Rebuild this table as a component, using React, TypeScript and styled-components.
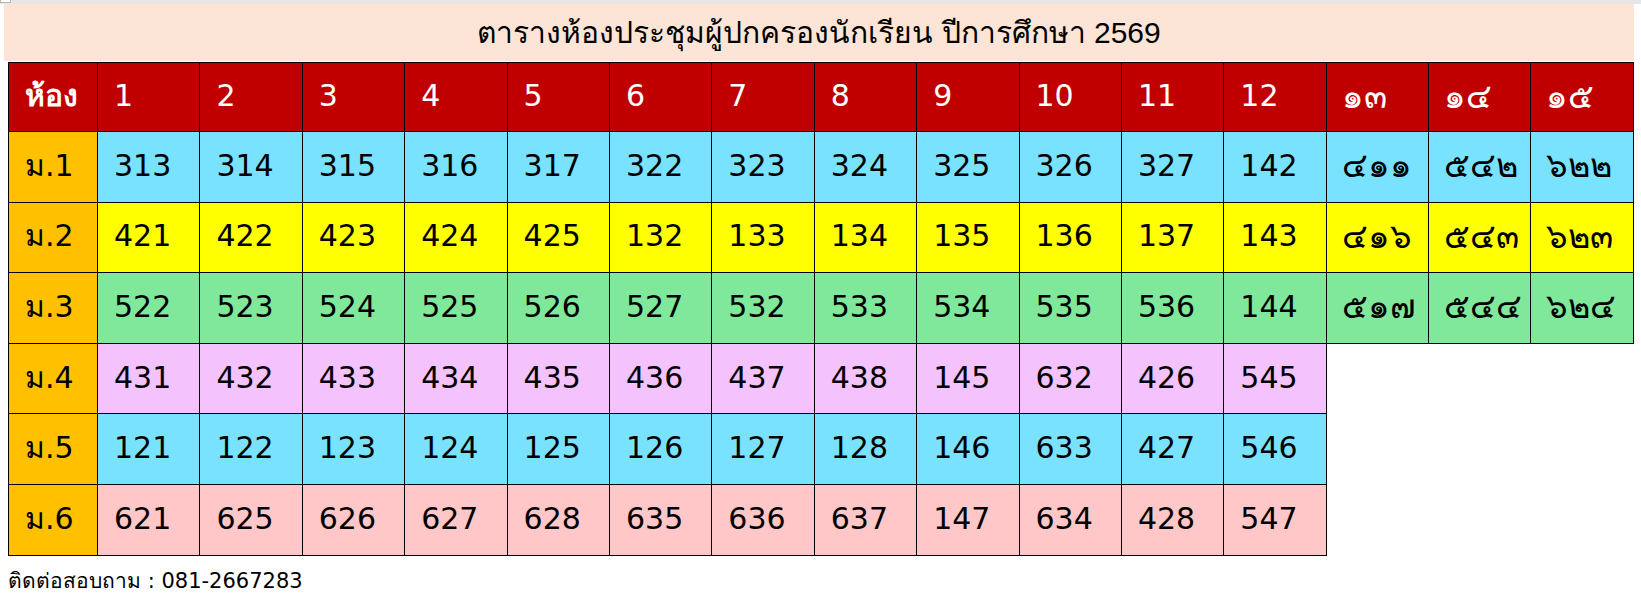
import React from "react";
import styled, { createGlobalStyle } from "styled-components";

const Global = createGlobalStyle`
  html, body { margin: 0; padding: 0; background: #ffffff; }
  body { font-family: "DejaVu Sans", "Noto Sans", sans-serif; color: #000; }
`;

const Page = styled.div`
  width: 1641px;
  display: flex;
  flex-direction: column;
`;

const TopStrip = styled.div`
  height: 4px;
  background: #e6e6e6;
  display: flex;
`;

const Corner = styled.div`
  width: 11px;
  height: 3px;
  background: #ffffff;
  border: 1px solid #b5b5b5;
  border-top: none;
  box-sizing: border-box;
`;

const TitleBand = styled.div`
  margin-left: 4px;
  width: 1630px;
  height: 57px;
  background: #fce4d6;
  display: flex;
  align-items: center;
  justify-content: center;
  font-family: "Liberation Sans", "Noto Sans", "DejaVu Sans", sans-serif;
  font-size: 30px;
  color: #000;
`;

const Table = styled.div`
  margin-left: 8px;
  margin-top: 1px;
  display: flex;
  flex-direction: column;
`;

const Row = styled.div<{ $h: number }>`
  display: grid;
  grid-template-columns: 90px repeat(15, 102.4px);
  height: ${(p) => p.$h}px;
`;

const Cell = styled.div<{ $bg: string; $fg?: string; $top?: boolean; $left?: boolean; $thai?: boolean; $bold?: boolean }>`
  box-sizing: border-box;
  background: ${(p) => p.$bg};
  color: ${(p) => p.$fg || "#000"};
  border-right: 1px solid #000;
  border-bottom: 1px solid #000;
  ${(p) => (p.$top ? "border-top: 1px solid #000;" : "")}
  ${(p) => (p.$left ? "border-left: 1px solid #000;" : "")}
  display: flex;
  align-items: center;
  padding-left: ${(p) => (p.$thai ? 15 : 16)}px;
  padding-bottom: 3px;
  font-size: ${(p) => (p.$thai ? 34 : 30)}px;
  font-weight: ${(p) => (p.$bold ? 700 : 400)};
  white-space: nowrap;
  overflow: hidden;
`;

const Footer = styled.div`
  margin-left: 8px;
  margin-top: 8px;
  font-size: 21px;
  font-family: "DejaVu Sans", "Noto Sans", sans-serif;
`;

const RED = "#c00000";
const ORANGE = "#ffc000";

const header = ["1", "2", "3", "4", "5", "6", "7", "8", "9", "10", "11", "12", "๑๓", "๑๔", "๑๕"];

const rows: { label: string; bg: string; cells: string[] }[] = [
  { label: "ม.1", bg: "#79e3ff", cells: ["313", "314", "315", "316", "317", "322", "323", "324", "325", "326", "327", "142", "๔๑๑", "๕๔๒", "๖๒๒"] },
  { label: "ม.2", bg: "#ffff00", cells: ["421", "422", "423", "424", "425", "132", "133", "134", "135", "136", "137", "143", "๔๑๖", "๕๔๓", "๖๒๓"] },
  { label: "ม.3", bg: "#7fe89b", cells: ["522", "523", "524", "525", "526", "527", "532", "533", "534", "535", "536", "144", "๕๑๗", "๕๔๔", "๖๒๔"] },
  { label: "ม.4", bg: "#f4c3fd", cells: ["431", "432", "433", "434", "435", "436", "437", "438", "145", "632", "426", "545"] },
  { label: "ม.5", bg: "#79e3ff", cells: ["121", "122", "123", "124", "125", "126", "127", "128", "146", "633", "427", "546"] },
  { label: "ม.6", bg: "#ffc7c7", cells: ["621", "625", "626", "627", "628", "635", "636", "637", "147", "634", "428", "547"] },
];

const isThaiDigit = (s: string) => /[\u0E50-\u0E59]/.test(s);

export default function App() {
  return (
    <>
      <Global />
      <Page>
        <TopStrip>
          <Corner />
        </TopStrip>
        <TitleBand>ตารางห้องประชุมผู้ปกครองนักเรียน ปีการศึกษา 2569</TitleBand>
        <Table>
          <Row $h={70}>
            <Cell $bg={RED} $fg="#fff" $top $left $bold>
              ห้อง
            </Cell>
            {header.map((h) => (
              <Cell key={h} $bg={RED} $fg="#fff" $top $thai={isThaiDigit(h)}>
                {h}
              </Cell>
            ))}
          </Row>
          {rows.map((r) => (
            <Row key={r.label} $h={70.6}>
              <Cell $bg={ORANGE} $left>
                {r.label}
              </Cell>
              {r.cells.map((c, i) => (
                <Cell key={i} $bg={r.bg} $thai={isThaiDigit(c)}>
                  {c}
                </Cell>
              ))}
            </Row>
          ))}
        </Table>
        <Footer>ติดต่อสอบถาม : 081-2667283</Footer>
      </Page>
    </>
  );
}
